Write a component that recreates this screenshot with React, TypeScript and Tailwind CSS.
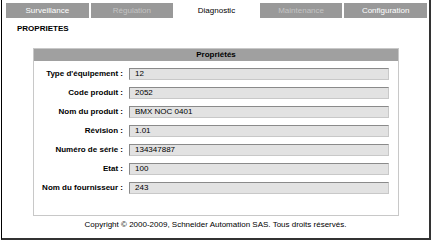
const TABS = [
  { label: "Surveillance", state: "on" },
  { label: "Régulation", state: "off" },
  { label: "Diagnostic", state: "active" },
  { label: "Maintenance", state: "off" },
  { label: "Configuration", state: "on" },
];

const PROPS = [
  { label: "Type d'équipement :", value: "12" },
  { label: "Code produit :", value: "2052" },
  { label: "Nom du produit :", value: "BMX NOC 0401" },
  { label: "Révision :", value: "1.01" },
  { label: "Numéro de série :", value: "134347887" },
  { label: "Etat :", value: "100" },
  { label: "Nom du fournisseur :", value: "243" },
];

export default function App() {
  return (
    <div className="w-[432px] h-[242px] bg-white font-['Liberation_Sans',Arial,sans-serif] text-[8px] text-black">
      <div className="w-[430px] h-[240px] ml-px border-l border-r-2 border-b-2 border-l-black border-r-[#333] border-b-[#333] flex flex-col">
        <div className="flex gap-[2px] pl-[4px] pr-[2px] pt-[3px]">
          {TABS.map((t) => (
            <div
              key={t.label}
              className={
                t.state === "active"
                  ? "flex-1 h-[15px] flex items-center justify-center bg-white text-black"
                  : t.state === "on"
                  ? "flex-1 h-[15px] flex items-center justify-center bg-[#999999] text-white"
                  : "flex-1 h-[15px] flex items-center justify-center bg-[#999999] text-[#c4c4c4]"
              }
            >
              {t.label}
            </div>
          ))}
        </div>
        <div className="pl-[15px] pt-[5px] font-bold">PROPRIETES</div>
        <div className="ml-[31px] mt-[13px] w-[366px] h-[168px] border border-[#c8c8c8] flex flex-col">
          <div className="h-[12px] bg-[#a0a0a0] flex items-center justify-center font-bold">
            Propriétés
          </div>
          <div className="flex flex-col gap-[7px] pt-[7px]">
            {PROPS.map((p) => (
              <div key={p.label} className="flex items-center h-[12px]">
                <div className="w-[95px] text-right font-bold pr-[6px]">{p.label}</div>
                <div className="w-[260px] h-[12px] bg-[#e2e2e2] border border-t-[#8a8a8a] border-l-[#8a8a8a] border-r-[#c8c8c8] border-b-[#c8c8c8] flex items-center pl-[5px]">
                  {p.value}
                </div>
              </div>
            ))}
          </div>
        </div>
        <div className="mt-[3px] text-center">
          Copyright © 2000-2009, Schneider Automation SAS. Tous droits réservés.
        </div>
      </div>
    </div>
  );
}
